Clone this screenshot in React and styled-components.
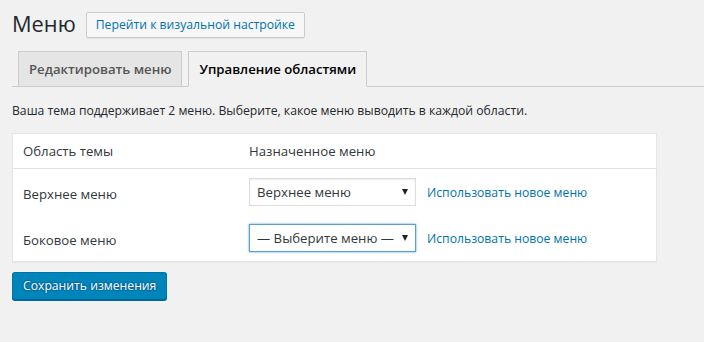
import React from "react";
import styled, { createGlobalStyle } from "styled-components";

const Global = createGlobalStyle`
  html, body { margin: 0; padding: 0; background: #f1f1f1; }
  body {
    font-family: "Open Sans", "Noto Sans", "DejaVu Sans", sans-serif;
    font-size: 12.2px;
    color: #23282d;
    width: 704px;
    height: 342px;
    overflow: hidden;
  }
`;

const Wrap = styled.div`
  padding: 9px 0 0 12px;
`;

const Header = styled.div`
  display: flex;
  align-items: center;
  gap: 10px;
  height: 30px;
`;

const Title = styled.h1`
  margin: 0;
  font-size: 21.8px;
  font-weight: 400;
  line-height: 30px;
  color: #23282d;
`;

const TitleAction = styled.a`
  display: inline-flex;
  align-items: center;
  height: 24px;
  padding: 0 9px;
  border: 1px solid #ccc;
  border-radius: 2px;
  background: #f7f7f7;
  color: #0073aa;
  font-size: 12.2px;
  text-decoration: none;
  box-shadow: 0 1px 0 #e4e4e4;
  margin-top: 1px;
`;

const TabNav = styled.nav`
  display: flex;
  align-items: flex-end;
  margin-top: 12px;
  padding-left: 6px;
  border-bottom: 1px solid #ccc;
  height: 35px;
`;

const Tab = styled.a`
  display: block;
  box-sizing: border-box;
  height: ${(p) => (p.$active ? "36px" : "35px")};
  margin-bottom: ${(p) => (p.$active ? "-1px" : "0")};
  margin-right: 6px;
  padding: 5px 10px;
  border: 1px solid #ccc;
  border-bottom: ${(p) => (p.$active ? "1px solid #f1f1f1" : "none")};
  background: ${(p) => (p.$active ? "#f1f1f1" : "#e5e5e5")};
  color: ${(p) => (p.$active ? "#000" : "#555")};
  font-size: 13.2px;
  font-weight: 600;
  line-height: 24px;
  text-decoration: none;
  white-space: nowrap;
`;

const Intro = styled.p`
  margin: 14px 0 12px;
  font-size: 12.2px;
  line-height: 20px;
`;

const Table = styled.table`
  width: 645px;
  border-collapse: collapse;
  background: #fff;
  border: 1px solid #e5e5e5;
  box-shadow: 0 1px 1px rgba(0, 0, 0, 0.04);
  table-layout: fixed;
`;

const Th = styled.th`
  text-align: left;
  font-weight: 400;
  font-size: 13.2px;
  line-height: 18px;
  padding: 8px 10px 8px;
  color: #32373c;
  border-bottom: 1px solid #e1e1e1;
  width: ${(p) => p.$w || "auto"};
`;

const Td = styled.td`
  padding: 9px 10px;
  font-size: 13.2px;
  color: #32373c;
  vertical-align: middle;
`;

const Label = styled.span`
  display: block;
  padding-top: 3px;
`;

const Controls = styled.div`
  display: flex;
  align-items: center;
  gap: 11px;
`;

const SelectBox = styled.div`
  position: relative;
  width: 167px;
  height: 28px;
  &::after {
    content: "";
    position: absolute;
    right: 8px;
    top: 11px;
    border-left: 3.5px solid transparent;
    border-right: 3.5px solid transparent;
    border-top: 6px solid #222;
    pointer-events: none;
  }
`;

const Select = styled.select`
  appearance: none;
  -webkit-appearance: none;
  box-sizing: border-box;
  width: 100%;
  height: 28px;
  margin: 0;
  padding: 0 18px 0 7px;
  background: #fff;
  border: 1px solid ${(p) => (p.$focus ? "#5b9dd9" : "#ddd")};
  box-shadow: ${(p) =>
    p.$focus ? "0 0 2px rgba(30, 140, 190, 0.8)" : "inset 0 1px 2px rgba(0, 0, 0, 0.07)"};
  border-radius: 0;
  color: #32373c;
  font-family: inherit;
  font-size: 13.2px;
  outline: none;
`;

const Link = styled.a`
  color: #0073aa;
  font-size: 12.2px;
  text-decoration: none;
  padding-top: 1px;
`;

const SaveButton = styled.button`
  margin-top: 10px;
  box-sizing: border-box;
  height: 28px;
  padding: 0 10px 1px;
  background: #0085ba;
  border: 1px solid #0073aa;
  border-bottom-color: #006799;
  border-radius: 3px;
  box-shadow: 0 1px 0 #006799;
  color: #fff;
  font-family: inherit;
  font-size: 12.2px;
  text-shadow: 0 -1px 1px #006799, 1px 0 1px #006799, 0 1px 1px #006799, -1px 0 1px #006799;
  cursor: pointer;
`;

const rows = [
  { label: "Верхнее меню", value: "Верхнее меню", focus: false },
  { label: "Боковое меню", value: "— Выберите меню —", focus: true },
];

export default function App() {
  return (
    <>
      <Global />
      <Wrap>
        <Header>
          <Title>Меню</Title>
          <TitleAction href="#">Перейти к визуальной настройке</TitleAction>
        </Header>
        <TabNav>
          <Tab href="#">Редактировать меню</Tab>
          <Tab href="#" $active>
            Управление областями
          </Tab>
        </TabNav>
        <Intro>Ваша тема поддерживает 2 меню. Выберите, какое меню выводить в каждой области.</Intro>
        <Table>
          <thead>
            <tr>
              <Th $w="206px">Область темы</Th>
              <Th>Назначенное меню</Th>
            </tr>
          </thead>
          <tbody>
            {rows.map((r) => (
              <tr key={r.label}>
                <Td>
                  <Label>{r.label}</Label>
                </Td>
                <Td>
                  <Controls>
                    <SelectBox>
                      <Select $focus={r.focus} defaultValue={r.value}>
                        <option>— Выберите меню —</option>
                        <option>Верхнее меню</option>
                      </Select>
                    </SelectBox>
                    <Link href="#">Использовать новое меню</Link>
                  </Controls>
                </Td>
              </tr>
            ))}
          </tbody>
        </Table>
        <SaveButton>Сохранить изменения</SaveButton>
      </Wrap>
    </>
  );
}
